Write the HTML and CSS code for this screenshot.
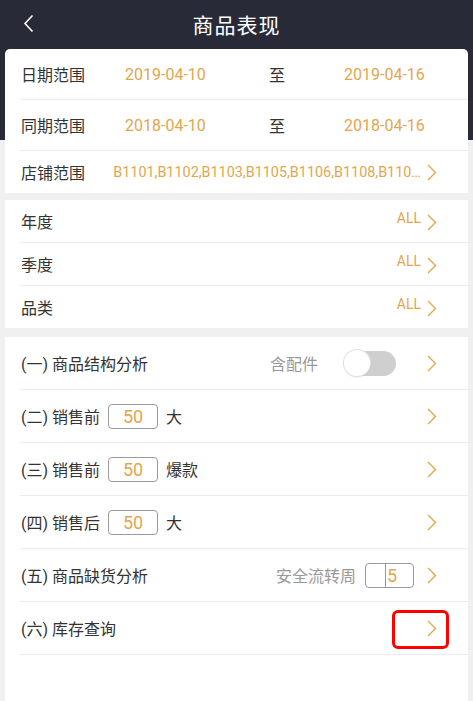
FILE: index.html
```html
<!DOCTYPE html>
<html lang="zh-CN">
<head>
  <meta charset="UTF-8" />
  <meta name="viewport" content="width=device-width, initial-scale=1.0" />
  <title>商品表现</title>
  <link rel="stylesheet" href="styles.css">
</head>
<body>
  <div class="page">
    <header class="navbar">
      <span class="back">
        <svg width="11" height="19" viewBox="0 0 11 19"><path d="M9.5 1.5 L2 9.5 L9.5 17.5" fill="none" stroke="#fff" stroke-width="1.6"/></svg>
      </span>
      <h1 class="title">商品表现</h1>
      <span></span>
    </header>

    <section class="card card-range">
      <div class="row range-row">
        <span class="label">日期范围</span>
        <span class="date">2019-04-10</span>
        <span class="to">至</span>
        <span class="date">2019-04-16</span>
      </div>
      <div class="row range-row">
        <span class="label">同期范围</span>
        <span class="date">2018-04-10</span>
        <span class="to">至</span>
        <span class="date">2018-04-16</span>
      </div>
      <div class="row store-row">
        <span class="label">店铺范围</span>
        <span class="stores">B1101,B1102,B1103,B1105,B1106,B1108,B110…</span>
        <svg class="chev" width="10" height="17" viewBox="0 0 10 17"><path d="M1 1 L8.5 8.5 L1 16" fill="none" stroke="#e2a64e" stroke-width="1.4"/></svg>
      </div>
    </section>

    <section class="card card-filter">
      <div class="row filter-row">
        <span class="label">年度</span>
        <span class="all">ALL</span>
        <svg class="chev" width="10" height="17" viewBox="0 0 10 17"><path d="M1 1 L8.5 8.5 L1 16" fill="none" stroke="#e2a64e" stroke-width="1.4"/></svg>
      </div>
      <div class="row filter-row">
        <span class="label">季度</span>
        <span class="all">ALL</span>
        <svg class="chev" width="10" height="17" viewBox="0 0 10 17"><path d="M1 1 L8.5 8.5 L1 16" fill="none" stroke="#e2a64e" stroke-width="1.4"/></svg>
      </div>
      <div class="row filter-row">
        <span class="label">品类</span>
        <span class="all">ALL</span>
        <svg class="chev" width="10" height="17" viewBox="0 0 10 17"><path d="M1 1 L8.5 8.5 L1 16" fill="none" stroke="#e2a64e" stroke-width="1.4"/></svg>
      </div>
    </section>

    <section class="card card-analysis">
      <div class="row item-row">
        <span class="label">(一) 商品结构分析</span>
        <span class="hint">含配件</span>
        <span class="switch"></span>
        <svg class="chev" width="10" height="17" viewBox="0 0 10 17"><path d="M1 1 L8.5 8.5 L1 16" fill="none" stroke="#e2a64e" stroke-width="1.4"/></svg>
      </div>
      <div class="row item-row">
        <span class="label">(二) 销售前</span>
        <span class="num">50</span>
        <span class="suffix">大</span>
        <svg class="chev" width="10" height="17" viewBox="0 0 10 17"><path d="M1 1 L8.5 8.5 L1 16" fill="none" stroke="#e2a64e" stroke-width="1.4"/></svg>
      </div>
      <div class="row item-row">
        <span class="label">(三) 销售前</span>
        <span class="num">50</span>
        <span class="suffix">爆款</span>
        <svg class="chev" width="10" height="17" viewBox="0 0 10 17"><path d="M1 1 L8.5 8.5 L1 16" fill="none" stroke="#e2a64e" stroke-width="1.4"/></svg>
      </div>
      <div class="row item-row">
        <span class="label">(四) 销售后</span>
        <span class="num">50</span>
        <span class="suffix">大</span>
        <svg class="chev" width="10" height="17" viewBox="0 0 10 17"><path d="M1 1 L8.5 8.5 L1 16" fill="none" stroke="#e2a64e" stroke-width="1.4"/></svg>
      </div>
      <div class="row item-row">
        <span class="label">(五) 商品缺货分析</span>
        <span class="hint">安全流转周</span>
        <span class="num num-weeks"><span class="caret"></span>5</span>
        <svg class="chev" width="10" height="17" viewBox="0 0 10 17"><path d="M1 1 L8.5 8.5 L1 16" fill="none" stroke="#e2a64e" stroke-width="1.4"/></svg>
      </div>
      <div class="row item-row marked">
        <span class="label">(六) 库存查询</span>
        <svg class="chev" width="10" height="17" viewBox="0 0 10 17"><path d="M1 1 L8.5 8.5 L1 16" fill="none" stroke="#e2a64e" stroke-width="1.4"/></svg>
        <span class="highlight"></span>
      </div>
    </section>
  </div>
</body>
</html>
```

FILE: styles.css
```css
body {
  margin: 0;
  font-family: Roboto, "Noto Sans CJK SC", sans-serif;
  color: #333;
  background-color: #f0f0f0;
}
.page {
  display: flex;
  flex-direction: column;
  min-height: 701px;
  background: linear-gradient(to bottom, #282a37 0, #282a37 140px, #f0f0f0 140px);
}
.navbar {
  display: grid;
  grid-template-columns: 1fr auto 1fr;
  align-items: center;
  height: 49px;
}
.back {
  display: flex;
  padding-left: 23px;
  margin-top: -2px;
}
.title {
  margin: -2px 0 0;
  font-size: 21px;
  font-weight: 400;
  color: #fff;
  letter-spacing: 1px;
}
.card {
  margin: 0 5px;
  padding-left: 15px;
  background: #fff;
}
.card-range {
  border-radius: 5px 5px 0 0;
}
.card-filter {
  margin-top: 7px;
}
.card-analysis {
  margin-top: 9px;
  flex: 1;
}
.row {
  display: flex;
  align-items: center;
  padding-right: 31px;
  border-bottom: 1px solid #ececec;
  font-size: 16px;
}
.label {
  padding-left: 1px;
  white-space: nowrap;
}
.range-row {
  height: 50px;
}
.range-row .label {
  width: 104px;
}
.date {
  width: 144px;
  color: #e2a64e;
}
.to {
  width: 75px;
}
.range-row .date:last-child {
  width: auto;
}
.store-row {
  height: 42px;
  border-bottom: none;
}
.stores {
  margin-left: auto;
  margin-right: 6px;
  font-size: 14.4px;
  color: #e2a64e;
  white-space: nowrap;
}
.chev {
  flex-shrink: 0;
}
.filter-row {
  height: 42px;
}
.filter-row:last-child {
  border-bottom: none;
}
.all {
  margin-left: auto;
  margin-right: 6px;
  margin-top: -6px;
  font-size: 14px;
  color: #e2a64e;
}
.filter-row .chev {
  margin-top: 2px;
}
.item-row {
  height: 52px;
}
.hint {
  margin-left: auto;
  color: #999;
}
.switch {
  position: relative;
  width: 52px;
  height: 25px;
  margin: 0 31px 0 26px;
  border-radius: 13px;
  background: #cfcfcf;
}
.switch::before {
  content: "";
  position: absolute;
  left: 0;
  top: -1px;
  width: 26px;
  height: 26px;
  border-radius: 50%;
  background: #fff;
  box-shadow: 0 0 0 1px #e2e2e2, 0 1px 2px rgba(0, 0, 0, 0.15);
}
.num {
  display: flex;
  align-items: center;
  justify-content: center;
  box-sizing: border-box;
  width: 50px;
  height: 25px;
  margin-left: 8px;
  border: 1px solid #9a9a9a;
  border-radius: 4px;
  font-size: 18px;
  color: #e2a64e;
}
.suffix {
  margin-left: 8px;
  margin-right: auto;
}
.num-weeks {
  justify-content: flex-start;
  width: 49px;
  margin-left: 9px;
  margin-right: 13px;
  padding-left: 19px;
}
.caret {
  width: 1px;
  height: 23px;
  margin-right: 1px;
  background: #999;
}
.marked {
  position: relative;
  justify-content: space-between;
}
.highlight {
  position: absolute;
  top: 8px;
  right: 19px;
  width: 57px;
  height: 39px;
  box-sizing: border-box;
  border: 3px solid #f00;
  border-radius: 6px;
}
```
